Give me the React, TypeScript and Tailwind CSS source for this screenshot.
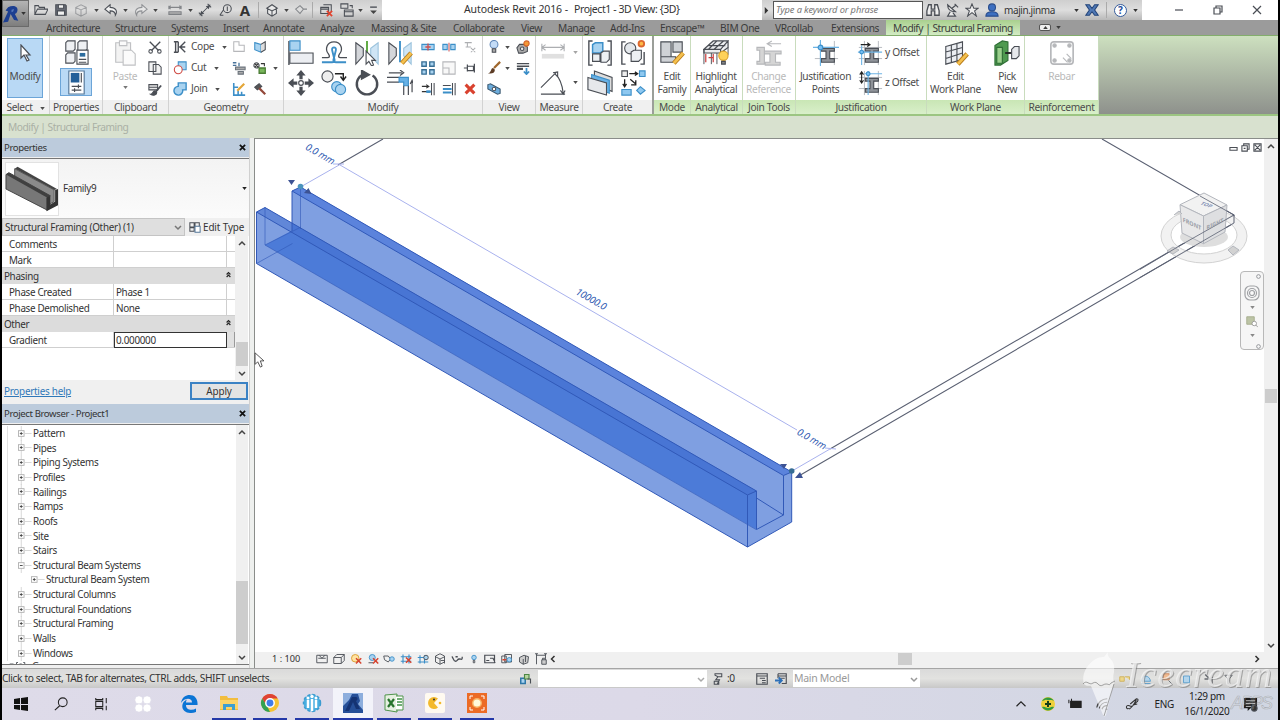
import type { ReactNode } from 'react';

interface IconProps {
  size?: string;
  box?: number;
  className?: string;
  children: ReactNode;
}

const DARK = '#4a4e55';
const BLUE = '#3c8fc8';
const SKY = '#a9d3f0';

function Icon({ size = 'w-[14px] h-[14px]', box = 16, className = '', children }: IconProps) {
  return (
    <svg
      viewBox={`0 0 ${box} ${box}`}
      className={`${size} ${className} block shrink-0`}
      fill="none"
      stroke={DARK}
      strokeWidth="1.2"
    >
      {children}
    </svg>
  );
}

function Big({ children }: { children: ReactNode }) {
  return <Icon size="w-[26px] h-[26px]" box={28}>{children}</Icon>;
}

function Caret({ className = '' }: { className?: string }) {
  return (
    <svg viewBox="0 0 6 4" className={`w-[5px] h-[3px] shrink-0 ${className}`}>
      <path d="M0 0h6L3 4z" fill="currentColor" />
    </svg>
  );
}

function Chevron({ d, className = '' }: { d: 'up' | 'down' | 'left' | 'right'; className?: string }) {
  const paths = { up: 'M1 6l3-3 3 3', down: 'M1 3l3 3 3-3', left: 'M5.5 1l-3 3 3 3', right: 'M2.5 1l3 3-3 3' };
  return (
    <svg viewBox="0 0 8 8" className={`w-[8px] h-[8px] shrink-0 ${className}`} fill="none" stroke="currentColor" strokeWidth="1.5">
      <path d={paths[d]} />
    </svg>
  );
}

/* ---------- title bar ---------- */

function QuickAccess() {
  return (
    <div className="w-[380px] h-[20px] shrink-0 flex items-center bg-gradient-to-b from-[#cfcfcf] via-[#dedede] to-[#b9b9b9] pl-[32px] text-[#444]">
      <Icon className="mr-[6px]"><path d="M1 13V3h4l1 2h6v2M1 13l3-6h12l-3 6z" /></Icon>
      <Icon className="mr-[6px]"><path d="M2 2h11l1 1v11H2z" fill="#676b75" /><path d="M5 2h6v4H5zM4 9h8v5H4z" fill="#f2f2f2" /></Icon>
      <Icon className="opacity-40"><path d="M2 5l6-3 6 3v7l-6 3-6-3zM2 5l6 3 6-3M8 8v7" /></Icon>
      <Caret className="ml-[6px] mr-[5px]" />
      <Icon><path d="M7 2L1 7l6 5V9c4 0 6 1 6 5 3-5 0-9-6-9z" fill="#f2f2f2" /></Icon>
      <Caret className="ml-[5px] mr-[6px]" />
      <Icon className="opacity-50"><path d="M9 2l6 5-6 5V9c-4 0-6 1-6 5-3-5 0-9 6-9z" fill="#f2f2f2" /></Icon>
      <Caret className="ml-[5px] mr-[10px]" />
      <Icon className="opacity-60"><path d="M1 5h14M1 3v4M15 3v4M3 3L1 5l2 2M13 3l2 2-2 2" /><path d="M1 10h14v3H1z" fill="#999" /></Icon>
      <Caret className="ml-[6px] mr-[5px]" />
      <Icon className="mr-[7px]"><path d="M2 14L14 2M1 11l4 4M11 1l4 4" /><path d="M3 13l3-1-2-2zM13 3l-3 1 2 2z" fill={DARK} /></Icon>
      <Icon className="mr-[5px]"><circle cx="9.500" cy="6.500" r="4.500" /><path d="M9.500 4v5M5 8l-4 6M1 14h4" /></Icon>
      <span className="text-[15px] leading-[20px] font-bold w-[14px] text-center text-[#333]">A</span>
      <div className="w-px h-[16px] bg-[#aaa] mx-[6px]" />
      <Icon><path d="M2 6l6-4 6 4-6 3zM3 7v5l5 3 5-3V7M8 9v6" fill="#e9e9e9" /></Icon>
      <Caret className="ml-[5px] mr-[4px]" />
      <Icon><path d="M3 7l5-4 4 4-4 5zM12 7h4" opacity=".6" /></Icon>
      <div className="w-px h-[16px] bg-[#aaa] ml-[5px] mr-[6px]" />
      <Icon className="mr-[7px]"><path d="M5 2h9v7M2 5h9v7H2zM2 7h9" /><path d="M9 9l6 6M15 9l-6 6" stroke="#e0432f" strokeWidth="2" /></Icon>
      <Icon><path d="M1 1h8v5H1zM5 8h10v7H5zM5 10h10M11 3h3v3" /></Icon>
      <Caret className="ml-[4px] mr-[6px]" />
      <Icon size="w-[9px] h-[9px]" box={8}><path d="M1 1h6" /><path d="M1 4h6L4 7z" fill="#444" stroke="none" /></Icon>
    </div>
  );
}

function TitleBar() {
  return (
    <div className="h-[20px] flex bg-white">
      <QuickAccess />
      <div className="w-[380px] h-[20px] shrink-0 flex items-center pl-[82px] text-[10.5px] tracking-[-0.1px] text-[#333] whitespace-pre">
        <span className="w-[110px]">Autodesk Revit 2016 -</span>
        <span className="tracking-[-0.42px]">Project1 - 3D View: {'{3D}'}</span>
      </div>
      <div className="w-[380px] h-[20px] shrink-0 flex items-center bg-gradient-to-b from-[#cfcfcf] via-[#dedede] to-[#b9b9b9] text-[#333]">
        <Icon size="w-[7px] h-[7px]" box={8} className="ml-[1px] mr-[3px]"><path d="M2 0l4 4-4 4z" fill="#333" stroke="none" /></Icon>
        <div className="w-[150px] h-[18px] bg-white border border-[#555] flex items-center pl-[2px] text-[9.3px] tracking-[-0.12px] italic text-[#777]">Type a keyword or phrase</div>
        <Icon className="ml-[3px] mr-[5px]"><path d="M3 2h3v5h4V2h3l2 7v5h-5V9H6v5H1V9z" fill="#eee" strokeWidth="1.500" /></Icon>
        <Icon className="mr-[6px]"><path d="M3 2c0 6 4 8 9 8zM8 6l5-4M6 10l-3 5h9l-3-4M11 1l4 4" fill="#e9e9e9" strokeWidth="1.300" /></Icon>
        <Icon className="mr-[6px]"><path d="M8 1l2 5h5l-4 3 2 6-5-4-5 4 2-6-4-3h5z" fill="#eee" /></Icon>
        <Icon><circle cx="8" cy="5" r="4" fill="#3d6fc0" stroke="#2a4d8c" /><path d="M1 15c0-4 3-5 7-5s7 1 7 5z" fill="#3d6fc0" stroke="#2a4d8c" /></Icon>
        <span className="text-[10px] tracking-[-0.4px] ml-[5px] w-[70px]">majin.jinma</span>
        <Caret className="mr-[6px]" />
        <Icon><path d="M1 2h4l3 4 3-4h4l-4 6 4 6h-4l-3-4-3 4H1l4-6z" fill="#4f78b5" stroke="#24457a" /></Icon>
        <div className="w-px h-[16px] bg-[#aaa] mx-[7px]" />
        <div className="w-[13px] h-[13px] rounded-full border border-[#345b9b] bg-white text-[#1c4b9b] text-[10px] leading-[11px] font-bold text-center">?</div>
        <Caret className="ml-[6px]" />
      </div>
      <div className="flex-1 flex items-center text-[#333]">
        <Icon size="w-[10px] h-[10px]" box={10} className="ml-[32px] mr-[29px]"><path d="M1 5h8" /></Icon>
        <Icon size="w-[10px] h-[10px]" box={10} className="mr-[29px]"><path d="M1 3h6v6H1zM3 3V1h6v6H7" /></Icon>
        <Icon size="w-[10px] h-[10px]" box={10}><path d="M1 1l8 8M9 1L1 9" /></Icon>
      </div>
    </div>
  );
}

const TABS = [
  ['Architecture', 'w-[69px]'], ['Structure', 'w-[56px]'], ['Systems', 'w-[52px]'], ['Insert', 'w-[40px]'],
  ['Annotate', 'w-[57px]'], ['Analyze', 'w-[51px]'], ['Massing & Site', 'w-[82px]'], ['Collaborate', 'w-[68px]'],
  ['View', 'w-[37px]'], ['Manage', 'w-[52px]'], ['Add-Ins', 'w-[50px]'], ['Enscape™', 'w-[60px]'],
  ['BIM One', 'w-[55px]'], ['VRcollab', 'w-[56px]'], ['Extensions', 'w-[55px]'],
];

function RibbonTabs() {
  return (
    <div className="h-[16px] flex bg-[#9b9b9b] border-b border-[#83ad6c] pl-[44px] text-[10.2px] leading-[16px] tracking-[-0.35px] text-[#3c3c3c] whitespace-nowrap">
      {TABS.map(([name, width]) => (
        <div key={name} className={`${width} shrink-0`}>{name}</div>
      ))}
      <div className="w-[134px] h-[15px] shrink-0 bg-gradient-to-b from-[#a9d08e] to-[#d3ebc4] pl-[7px] tracking-[-0.5px]">Modify | Structural Framing</div>
      <div className="flex items-center ml-[19px] gap-[5px]">
        <div className="w-[12px] h-[7px] rounded-[2px] border border-[#555] bg-[#eee] flex items-center justify-center">
          <Caret className="rotate-180" />
        </div>
        <Caret />
      </div>
    </div>
  );
}

/* ---------- ribbon ---------- */

function Panel({ title, width, green, children }: { title: ReactNode; width: string; green?: boolean; children: ReactNode }) {
  return (
    <div className={`${width} shrink-0 h-full flex flex-col border-r ${green ? 'border-[#c9dcbd]' : 'border-[#d2d2d2]'}`}>
      <div className="h-[64px] flex">{children}</div>
      <div className={`h-[14px] pt-[2px] flex items-center justify-center whitespace-nowrap ${green ? 'bg-gradient-to-b from-[#c9e6b5] to-[#d9efca]' : 'bg-[#f0f0f0]'}`}>{title}</div>
    </div>
  );
}

function LargeButton({ icon, lines, width, muted }: { icon: ReactNode; lines: string[]; width: string; muted?: boolean }) {
  return (
    <div className={`${width} shrink-0 flex flex-col items-center pt-[4px] leading-[13.4px] whitespace-nowrap ${muted ? 'text-[#b9b9b9]' : ''}`}>
      <div className={`mb-[4px] ${muted ? 'opacity-40' : ''}`}>{icon}</div>
      {lines.map((line) => <span key={line}>{line}</span>)}
    </div>
  );
}

const copeIcon = <Icon><path d="M1 2h5M1 14h5M3 2v12M6 2v12M8 8l6-6M8 8l6 6M7 8h7" strokeWidth="1.600" /></Icon>;
const cutIcon = <Icon><path d="M6 1h9v9H6z" fill={SKY} stroke={BLUE} /><circle cx="6" cy="10" r="4.500" fill="#fff" stroke="#cf4a43" /></Icon>;
const joinIcon = <Icon><path d="M6 1h9v8h-4a5 5 0 1 1-5-4z" fill={SKY} stroke={BLUE} strokeWidth="1.600" /></Icon>;

const GEOMETRY_MID = [
  <Icon key="a" className="opacity-40"><path d="M2 2h6v4h6v7H2z" /></Icon>,
  <Icon key="b"><path d="M1 2h4M1 5h4M8 2v4" stroke="#47729a" strokeWidth="1.500" /><path d="M4 7h11v3H4zM7 12h6v3H7z" fill="#aaa" stroke="#6b737c" /></Icon>,
  <Icon key="c"><path d="M2 1v14h13M2 6h5M7 15v-5M11 15v-4" stroke={BLUE} strokeWidth="1.800" /><path d="M6 10l8-8" stroke="#e4a637" strokeWidth="2.500" /></Icon>,
];
const GEOMETRY_END = [
  <Icon key="a"><path d="M2 3l7 2v9l-7-3z" fill={SKY} stroke={BLUE} /><path d="M9 5l5-3v9l-5 3" fill="#ddd" /></Icon>,
  <Icon key="b"><circle cx="4" cy="5" r="3" fill="#ddd" /><path d="M2 3l4 4M6 3L2 7M9 3h4v3" stroke="#333" /><path d="M7 8h7v6H7z" fill="#79b65b" stroke="#4b7d35" strokeWidth="1.500" /></Icon>,
  <Icon key="c"><path d="M2 6l5-4 3 3-5 4z" fill="#555" /><path d="M7 7l7 7" stroke="#93483a" strokeWidth="2.500" /></Icon>,
];

const MODIFY_LARGE = [
  <Big key="align"><path d="M1 1v26" strokeWidth="1.500" /><path d="M2 1h11v10H2z" fill={SKY} stroke={BLUE} /><path d="M2 14h25v11H2z" fill="#eceef2" /></Big>,
  <Big key="offset"><path d="M1 19h6c2 0 3-1 1-4-4-5-2-13 6-13s10 8 6 13c-2 3-1 4 1 4h7" strokeWidth="1.400" /><path d="M1 24h11c3 0 3-2 2-5l-2-8c-1-4 5-4 4 0l-2 8c-1 3-1 5 2 5h11" stroke={BLUE} strokeWidth="2" /></Big>,
  <Big key="mirror"><path d="M2 3l8 6v8l-8 9z" fill="#d4d6da" /><path d="M26 3l-8 6v8l8 9z" fill="#cfe5f5" stroke="#9cc3dd" /><path d="M14 1v18" stroke="#57a639" strokeWidth="2" /><path d="M13 12v14l3-3 3 5 2-1-2-5h4z" fill="#fff" /></Big>,
  <Big key="mirror2"><path d="M2 3l8 6v8l-8 9z" fill="#d4d6da" /><path d="M26 3l-8 6v8l8 9z" fill="#cfe5f5" stroke="#9cc3dd" /><path d="M14 1v23" stroke={BLUE} strokeWidth="2" /><path d="M16 25l10-11" stroke="#b87b19" strokeWidth="5" /><path d="M16 25l10-11" stroke="#f4c04e" strokeWidth="3" /></Big>,
  <Big key="move"><path d="M14 5v5M14 18v5M5 14h5M18 14h5" strokeWidth="3.500" /><path d="M14 0l5 6H9zM14 28l5-6H9zM0 14l6-5v10zM28 14l-6-5v10z" fill={DARK} stroke="none" /><circle cx="14" cy="14" r="2.500" /></Big>,
  <Big key="copy"><circle cx="7" cy="7" r="6" fill="#eee" /><circle cx="17" cy="18" r="5.500" fill={SKY} stroke={BLUE} /><circle cx="21" cy="21" r="5.500" fill={SKY} stroke={BLUE} /><path d="M15 4h9v6M21 7l3 4 3-4" stroke="#222" strokeWidth="1.500" /></Big>,
  <Big key="rotate"><path d="M8 6a11 11 0 1 0 12 0" strokeWidth="2.600" /><path d="M8 0l9 5-9 5z" fill={DARK} /></Big>,
  <Big key="trim"><path d="M0 8h15M0 13h13" /><path d="M13 8h10v9h-5v-4h-5z" fill="#67b1e6" stroke={BLUE} /><path d="M18 17v10M23 17v10M2 3h14M14 0l4 3-4 3M27 24V12M25 15l2-4 1 3" strokeWidth="1.300" /></Big>,
];

const MODIFY_SMALL = [
  <Icon key="1"><path d="M1 5h14v6H1z" fill={SKY} stroke={BLUE} /><path d="M5 8h6M8 4v8" stroke="#d05050" strokeWidth="1.500" /></Icon>,
  <Icon key="2"><path d="M1 5h5v6H1zM10 5h5v6h-5z" fill={SKY} stroke={BLUE} /><path d="M8 3v10" stroke="#d05050" /></Icon>,
  <Icon key="3" className="opacity-45"><path d="M2 3h8M5 3v5M3 8h6M9 9l5 5M14 9l-5 5" /></Icon>,
  <Icon key="4"><path d="M1 1h5v5H1zM10 1h5v5h-5zM1 10h5v5H1zM10 10h5v5h-5z" fill={SKY} stroke="#386e94" strokeWidth="1.500" /></Icon>,
  <Icon key="5" className="opacity-40"><path d="M1 1h14v14H1zM1 8h7v7" fill="#eee" /></Icon>,
  <Icon key="6"><path d="M1 8h4M5 4v8M5 6h7v5H5M13 3v10" strokeWidth="1.400" /></Icon>,
  <Icon key="7"><path d="M12 1v14M15 1v14" /><path d="M1 5h7M6 3l3 2-3 2M1 11h10" stroke="#333" /><path d="M6 11h5" stroke={BLUE} strokeWidth="3" /></Icon>,
  <Icon key="8"><path d="M12 1v14M15 1v14M1 4h9" /><path d="M1 8h10M1 12h10" stroke={BLUE} strokeWidth="2.500" /></Icon>,
  <Icon key="9"><path d="M3 3l10 10M13 3L3 13" stroke="#d9422f" strokeWidth="3.500" /></Icon>,
];

const beam = <g stroke="#b4b8bd"><path d="M2 20h25M2 8h25M8 1v26M23 1v26" strokeWidth="1" /><path d="M9 9h14v3h-5v8h5v4H9v-4h5v-8H9z" fill="#8f9399" stroke={DARK} /></g>;

function Ribbon() {
  return (
    <div className="h-[80px] flex bg-white border-b-2 border-[#9cc582] text-[10.2px] tracking-[-0.35px] text-[#4c4c4c]">
      <Panel width="w-[48px]" title={<span className="flex items-center gap-[7px]">Select <Caret /></span>}>
        <div className="w-[36px] h-[60px] ml-[5px] mt-[2px] bg-[#b9d9f5] border border-[#6ca5d8] flex flex-col items-center pt-[5px]">
          <Icon size="w-[18px] h-[18px]" box={18}><path d="M5 1v13l3-3 3 6 2-1-3-5h4z" fill="#fff" /></Icon>
          <span className="mt-[7px] leading-[14px]">Modify</span>
        </div>
      </Panel>
      <Panel width="w-[53px]" title="Properties">
        <div className="w-full flex flex-col items-center pt-[3px]">
          <Icon size="w-[26px] h-[26px]" box={28}><path d="M3 4l2-2h8v9l-2 2H3zM16 4l2-2h8v9l-2 2h-8zM3 17l2-2h8v9l-2 2H3z" fill="#eef0f3" /><path d="M15 12h12v15H15z" fill="#fff" /><path d="M18 15h6v4h-6z" fill="#2d6d9f" stroke="none" /><path d="M17 22h8M17 25h8" /></Icon>
          <div className="mt-[3px] w-[32px] h-[28px] bg-[#b9d9f5] border border-[#6ca5d8] flex items-center justify-center">
            <Icon size="w-[25px] h-[25px]" box={26}><path d="M5 1h16v24H5z" fill="#fff" stroke="#55789a" /><path d="M7 3h9v10H7z" fill="#225f99" stroke="none" /><path d="M8 17h10M8 21h10M15 15v4M11 19v4M18 3v10" /></Icon>
          </div>
        </div>
      </Panel>
      <Panel width="w-[66px]" title="Clipboard">
        <div className="w-[44px] flex flex-col items-center pt-[4px] text-[#b9b9b9]">
          <div className="opacity-35"><Big><path d="M4 3h16v21H4z" fill="#ddd" /><path d="M8 1h8v5H8zM12 11h9l4 4v12H12z" fill="#f4f4f4" /></Big></div>
          <span className="leading-[13px] mt-[4px]">Paste</span>
          <Caret className="mt-[3px] text-[#777]" />
        </div>
        <div className="flex flex-col gap-[7px] pt-[4px] ml-[1px]">
          <Icon><path d="M2 2l10 10M14 2L4 12" strokeWidth="1.600" /><circle cx="3" cy="13" r="2" /><circle cx="13" cy="13" r="2" /></Icon>
          <Icon><path d="M1 1h8v11H1zM6 4h6l3 3v8H6z" fill="#f3f3f3" /></Icon>
          <Icon><path d="M1 3h10v6H1zM1 6h10" fill="#e9e9e9" /><path d="M15 4l-6 7" strokeWidth="2" /><path d="M3 14c3 0 2-4 5-4l2 2c0 3-4 4-7 2z" fill={DARK} /></Icon>
        </div>
      </Panel>
      <Panel width="w-[115px]" title="Geometry">
        <div className="w-[59px] flex flex-col gap-[7px] pt-[4px] pl-[4px]">
          {[['Cope', copeIcon], ['Cut', cutIcon], ['Join', joinIcon]].map(([label, icon]) => (
            <div key={label as string} className="flex items-center h-[14px]">
              {icon}<span className="ml-[4px] mr-[8px]">{label}</span><Caret />
            </div>
          ))}
        </div>
        <div className="flex flex-col gap-[7px] pt-[4px] ml-[4px]">{GEOMETRY_MID}</div>
        <div className="flex flex-col gap-[7px] pt-[4px] ml-[7px]">{GEOMETRY_END}</div>
        <Caret className="mt-[31px] ml-[6px]" />
      </Panel>
      <Panel width="w-[199px]" title="Modify">
        <div className="grid grid-cols-4 w-[132px] pt-[2px] auto-rows-[30px] justify-items-center items-center">{MODIFY_LARGE}</div>
        <div className="grid grid-cols-3 w-[63px] pt-[4px] ml-[1px] auto-rows-[21px] justify-items-center">{MODIFY_SMALL}</div>
      </Panel>
      <Panel width="w-[53px]" title="View">
        <div className="w-[18px] pt-[4px] flex flex-col gap-[7px] items-end">
          <Icon><circle cx="8" cy="5" r="4.500" fill="#c4dcf7" stroke="#6288b8" /><path d="M6 10h4v4H6z" fill="#aaa" /></Icon>
          <Icon><path d="M15 1L8 8" stroke="#a0672c" strokeWidth="2.500" /><path d="M1 14c4 0 3-6 6-6l2 2c0 4-4 5-8 4z" fill="#5d3c25" stroke="none" /></Icon>
          <Icon><path d="M1 3l3-1 11 6v5l-3 1L1 8z" fill="#6daddd" stroke="#39566e" /><circle cx="8" cy="8" r="2" fill="#fff" /></Icon>
        </div>
        <div className="flex flex-col gap-[18px] pt-[10px] ml-[4px]"><Caret /><Caret /></div>
        <div className="flex flex-col gap-[7px] pt-[4px] ml-[6px]">
          <Icon><path d="M1 9l3-4h5l4 3v5l-5 2H3z" fill="#aaa" /><circle cx="7" cy="10" r="2" fill="#eee" /><circle cx="12" cy="4" r="3" fill="#f49a36" stroke="#d4622b" /></Icon>
          <Icon><path d="M1 3h14M1 6h14" strokeWidth="1.500" /><path d="M1 9h7" strokeWidth="2.500" /><path d="M12 8v7M9 12l3 3 3-3" stroke={BLUE} strokeWidth="2" /></Icon>
        </div>
      </Panel>
      <Panel width="w-[47px]" title="Measure">
        <div className="flex flex-col gap-[4px] pt-[4px] ml-[4px]">
          <div className="opacity-45"><Big><path d="M2 8h24M2 4v8M26 4v8M6 5L2 8l4 3M22 5l4 3-4 3" /><path d="M2 15h24v5H2z" fill="#bbb" stroke="none" /></Big></div>
          <Big><path d="M1 26h26M1 19L18 2M16 4c6 5 8 12 9 21M14 3l5-1v5M22 22l3 4 2-4" /></Big>
        </div>
        <div className="flex flex-col gap-[27px] pt-[15px] ml-[7px]"><Caret className="opacity-50" /><Caret /></div>
      </Panel>
      <Panel width="w-[70px]" title="Create">
        <div className="grid grid-cols-2 w-[66px] pt-[2px] auto-rows-[30px] justify-items-center items-center">
          <Big><path d="M6 1H2v26h4M22 1h4v26h-4" strokeWidth="1.500" /><path d="M6 5l3-2h8v9l-3 2H6z" fill={SKY} stroke={BLUE} strokeWidth="1.600" /><path d="M6 15h8v8H6zM15 14l3-2h6v9l-3 3h-6z" fill="#edf0f3" /></Big>
          <Big><path d="M6 2H2v24h4M22 26h4V13" strokeWidth="1.500" /><circle cx="11" cy="9" r="6" fill="#e4e8ec" /><path d="M12 13l3-2h8v9l-3 3h-8z" fill="#edf0f3" /><circle cx="23" cy="4" r="3" fill="#fcba48" stroke="#dd682f" strokeWidth="2" /></Big>
          <Big><path d="M8 1l19 7v15L8 16z" fill="#ddd" /><path d="M5 5l19 6v14L5 18z" fill="#67b1e6" stroke={BLUE} /><path d="M1 8l20 6v13L1 21z" fill="#e6e8eb" /></Big>
          <Big><path d="M2 1h6v6H2z" fill="#eee" /><path d="M21 1h6v6h-6zM2 21h10v6H2zM18 22l4-4 5 4-5 4z" fill="#8ec8f0" stroke={BLUE} /><path d="M10 4h8M16 2l3 2-3 2M5 10v7M3 15l2 3 2-3M11 10l6 5M17 11v5h-5" stroke="#222" strokeWidth="1.400" /></Big>
        </div>
      </Panel>
      <div className="w-[2px] h-full bg-[#9b9f99] shrink-0 -ml-[1px]" />
      <Panel width="w-[37px]" title="Mode" green>
        <LargeButton width="w-[36px]" lines={['Edit', 'Family']} icon={<Big><path d="M2 2h11v16H2zM15 2h10v11H15zM2 18h16v6H2z" fill="#cfd2d6" /><path d="M16 25l10-11" stroke="#b87b19" strokeWidth="5" /><path d="M16 25l10-11" stroke="#f4c04e" strokeWidth="3" /></Big>} />
      </Panel>
      <Panel width="w-[52px]" title="Analytical" green>
        <LargeButton width="w-[50px]" lines={['Highlight', 'Analytical']} icon={<Big><path d="M1 10L11 1h16l-8 9zM1 10v4h18v-4M27 1v7l-8 6M6 10l9-9M12 10l10-9M6 6h18" fill="#eceef0" strokeWidth="1.300" /><path d="M1 10v16M9 14v12M15 14v12M27 8v8" strokeWidth="1" /><path d="M3 15v9M11 15v9M6 19h5" stroke="#cc3b3b" strokeWidth="1.300" /><circle cx="22" cy="17" r="5" fill="#ffd25a" stroke="#dca32b" /><path d="M20 23h4v3h-4z" fill="#888" /></Big>} />
      </Panel>
      <Panel width="w-[53px]" title="Join Tools" green>
        <LargeButton muted width="w-[51px]" lines={['Change', 'Reference']} icon={<Big><path d="M13 4h14M17 1l-5 3 5 3" /><path d="M1 8h8v18H1v-3h3V11H1zM9 12h18v3h-6v9h5v3H10v-3h5v-9H9z" fill="#999" /></Big>} />
      </Panel>
      <Panel width="w-[131px]" title="Justification" green>
        <LargeButton width="w-[59px]" lines={['Justification', 'Points']} icon={<Big>{beam}<path d="M8 0v28M0 8h28" stroke="#6db4e5" /><circle cx="8" cy="8" r="2.500" fill="#77bff5" stroke={BLUE} /></Big>} />
        <div className="flex flex-col gap-[4px] pt-[4px] ml-[2px]">
          <div className="flex items-center"><Big>{beam}<path d="M5 6v21M1 13h26" stroke="#6db4e5" /><circle cx="5" cy="13" r="2" fill="#77bff5" stroke={BLUE} /><path d="M4 5h9M11 3l3 2-3 2" stroke="#222" /></Big><span className="whitespace-nowrap ml-[2px]">y Offset</span></div>
          <div className="flex items-center"><Big>{beam}<path d="M12 1v26M8 4h19" stroke="#6db4e5" /><circle cx="12" cy="4" r="2" fill="#77bff5" stroke={BLUE} /><path d="M5 3v10M3 5l2-3 2 3M3 11l2 3 2-3" stroke="#222" /></Big><span className="whitespace-nowrap ml-[2px]">z Offset</span></div>
        </div>
      </Panel>
      <Panel width="w-[98px]" title="Work Plane" green>
        <LargeButton width="w-[57px]" lines={['Edit', 'Work Plane']} icon={<Big><path d="M3 7l18-5v19L3 26zM3 13l18-5M3 20l18-6M9 5v19M15 4v18" fill="#eceef2" /><path d="M16 26l10-11" stroke="#b87b19" strokeWidth="5" /><path d="M16 26l10-11" stroke="#f4c04e" strokeWidth="3" /></Big>} />
        <div className="w-px bg-[#d9d9d9] ml-[2px]" />
        <LargeButton width="w-[42px]" lines={['Pick', 'New']} icon={<Big><path d="M1 6l8-5 6 1v20l-8 5H1z" fill="#4f9a50" stroke="#2e6e35" /><path d="M3 8h6v17H3z" fill="#9bd08d" stroke="#2e6e35" /><path d="M12 14h8" stroke="#222" strokeWidth="2" /><path d="M19 10l3-3h5v10l-3 3h-5z" fill="#e6e8eb" /></Big>} />
      </Panel>
      <Panel width="w-[74px]" title="Reinforcement" green>
        <LargeButton muted width="w-[73px]" lines={['Rebar']} icon={<Big><rect x="2" y="2" width="24" height="24" rx="3" strokeWidth="1.800" /><circle cx="6" cy="6" r="1.800" fill={DARK} /><circle cx="22" cy="6" r="1.800" fill={DARK} /><circle cx="6" cy="22" r="1.800" fill={DARK} /><circle cx="22" cy="22" r="1.800" fill={DARK} /><path d="M15 19l5 5M19 15l5 5" /></Big>} />
      </Panel>
      <div className="flex-1 bg-gradient-to-b from-[#cde0bf] to-[#8e918c]" />
    </div>
  );
}

/* ---------- left docked palettes ---------- */

function PaletteHeader({ title }: { title: string }) {
  return (
    <div className="h-[19px] shrink-0 bg-[#bccbdc] flex items-center justify-between pl-[2px] pr-[3px] text-[#333]">
      <span className="text-[9.6px] tracking-[-0.4px] pt-[1px]">{title}</span>
      <Icon size="w-[7px] h-[7px]" box={8}><path d="M1 1l6 6M7 1L1 7" stroke="#111" strokeWidth="2" /></Icon>
    </div>
  );
}

type Row = { name: string; value?: string; group?: boolean; active?: boolean };

const ROWS: Row[] = [
  { name: 'Comments', value: '' },
  { name: 'Mark', value: '' },
  { name: 'Phasing', group: true },
  { name: 'Phase Created', value: 'Phase 1' },
  { name: 'Phase Demolished', value: 'None' },
  { name: 'Other', group: true },
  { name: 'Gradient', value: '0.000000', active: true },
];

function PropertyRow({ row }: { row: Row }) {
  if (row.group) {
    return (
      <div className="h-[16px] bg-[#dcdcdc] flex items-center justify-between pl-[2px] pr-[4px]">
        <span className="pt-[1px]">{row.name}</span>
        <Icon size="w-[5px] h-[7px]" box={8} className="mb-[4px]"><path d="M1 4l3-3 3 3M1 8l3-3 3 3" stroke="#222" strokeWidth="1.900" /></Icon>
      </div>
    );
  }
  return (
    <div className="h-[16px] flex border-b border-[#cfcfcf] leading-[16px]">
      <div className="w-[112px] pl-[7px] border-r border-[#cfcfcf]">{row.name}</div>
      <div className={`w-[113px] ${row.active ? 'border border-[#333] -mb-px leading-[15px] pl-px tracking-[-0.3px]' : 'border-r border-[#cfcfcf] pl-[2px]'}`}>{row.value}</div>
      {row.active && <div className="flex-1 bg-[#e1e1e1] border-r border-[#999]" />}
    </div>
  );
}

function PropertiesPalette() {
  return (
    <div className="h-[266px] flex flex-col bg-[#f0f0f0]">
      <PaletteHeader title="Properties" />
      <div className="h-[60px] shrink-0 mt-[1px] border-t border-[#777] bg-gradient-to-b from-[#f3f3f3] to-[#fbfbfb] flex items-center pl-[3px] pr-[2px]">
        <div className="w-[54px] h-[54px] bg-white border border-[#e2e2e2]">
          <svg viewBox="0 0 54 54" className="w-[52px] h-[52px] overflow-visible">
            <path d="M9 6l3-2 41 23-3 1z" fill="#444" />
            <path d="M9 6l41 22v12l-7 4V34L9 15z" fill="#8a8a8a" stroke="#555" />
            <path d="M0 12l3-2 43 24-3 1v14L0 27z" fill="#777" stroke="#444" />
            <path d="M0 12l3-2 43 24-3 2z" fill="#3f3f3f" />
            <path d="M42 36l4-2v9l5-3V28l3-1v17l-12 6z" fill="#333" />
          </svg>
        </div>
        <span className="flex-1 ml-[4px]">Family9</span>
        <Caret className="text-[#222]" />
      </div>
      <div className="h-[18px] shrink-0 flex items-center">
        <div className="w-[183px] h-[18px] bg-[#dfdfdf] border border-[#c4c4c4] flex items-center justify-between pl-[2px] pr-[2px] whitespace-nowrap tracking-[-0.25px]">
          Structural Framing (Other) (1) <Chevron d="down" className="text-[#777]" />
        </div>
        <Icon size="w-[12px] h-[12px]" box={14} className="ml-[4px] mr-[2px]"><path d="M1 2h5v5H1zM7 2h5v5H7zM1 8h5v4H1z" /><path d="M7 6h6v7H7z" fill="#fff" stroke="#55789a" /></Icon>
        <span className="whitespace-nowrap tracking-[-0.1px]">Edit Type</span>
      </div>
      <div className="h-[144px] shrink-0 flex bg-white">
        <div className="w-[233px]">
          {ROWS.map((row) => <PropertyRow key={row.name} row={row} />)}
        </div>
        <div className="w-[13px] flex flex-col items-center bg-[#f0f0f0] py-[3px] text-[#444]">
          <Chevron d="up" />
          <div className="flex-1" />
          <div className="w-[12px] h-[24px] bg-[#cdcdcd] mb-[3px]" />
          <Chevron d="down" />
        </div>
      </div>
      <div className="h-[22px] shrink-0 flex items-center justify-between pl-[2px] pr-[1px]">
        <span className="text-[#2f78b9] underline tracking-[-0.25px]">Properties help</span>
        <div className="w-[58px] h-[18px] border-2 border-[#3b82c4] bg-[#e3e3e3] text-center leading-[15px] tracking-[-0.1px]">Apply</div>
      </div>
    </div>
  );
}

const TREE = [
  'Pattern', 'Pipes', 'Piping Systems', 'Profiles', 'Railings', 'Ramps', 'Roofs', 'Site', 'Stairs',
  'Structural Beam Systems', '>Structural Beam System', 'Structural Columns', 'Structural Foundations',
  'Structural Framing', 'Walls', 'Windows',
];

function ProjectBrowser() {
  return (
    <div className="h-[261px] flex flex-col">
      <PaletteHeader title="Project Browser - Project1" />
      <div className="flex-1 min-h-0 mt-[1px] flex border-t border-b border-[#777] bg-white overflow-hidden">
        <div className="flex-1 pl-[5px] pt-[1px]">
          <div className="border-l border-[#e2e2e2] pl-[9px]">
            {TREE.map((item) => {
              const nested = item.startsWith('>');
              const open = item === 'Structural Beam Systems';
              return (
                <div key={item} className={`h-[14.67px] flex items-center whitespace-nowrap ${nested ? 'pl-[13px]' : ''}`}>
                  <Icon size="w-[16px] h-[15px]" box={16}>
                    {!nested && <path d="M4 0v16" stroke="#d5d5d5" strokeWidth="1" />}
                    <path d="M8 8h7" stroke="#d5d5d5" strokeWidth="1" />
                    <rect x="1" y="5" width="6" height="6" fill="#fff" stroke="#aaa" strokeWidth=".9" />
                    <path d={open ? 'M2.500 8h3' : 'M2.500 8h3M4 6.500v3'} stroke="#444" strokeWidth="1" />
                  </Icon>
                  <span>{nested ? item.slice(1) : item}</span>
                </div>
              );
            })}
          </div>
          <div className="h-[10px] flex items-start whitespace-nowrap leading-[10px]">
            <Icon size="w-[22px] h-[12px]" box={16} className="mr-[3px]"><path d="M-3 4h5M8 2H6v9h2M15 2h2v9h-2M10 4h3v4h-3z" /></Icon>
            Groups
          </div>
        </div>
        <div className="w-[12px] flex flex-col items-center bg-[#f0f0f0] py-[3px] text-[#444] mr-[1px]">
          <Chevron d="up" />
          <div className="flex-1" />
          <div className="w-[12px] h-[63px] bg-[#cdcdcd] mb-[9px]" />
          <Chevron d="down" />
        </div>
      </div>
    </div>
  );
}

/* ---------- drawing area ---------- */

function Drawing() {
  return (
    <svg viewBox="255 139 1009 513" className="w-[1009px] h-[513px] block" fill="none">
      <path d="M338 165l45-26M1102 139l132 76v8M830 449l350-203.500 54-30.500M797 477l437-254" stroke="#5a6072" strokeWidth="1.100" />
      <path d="M300.500 187L340 164.500M333 164h11M340 165L797 430M825 448l11 1M792 471l38-22" stroke="#a9b2ee" strokeWidth="1" />

      <path d="M256.500 212l8.500-4.500L292 223v-32l8.500-4L791.700 472v50l-44.200 25L256.500 263.500z" fill="#7f9fe1" />
      <path d="M292 191l8.500-4L791.700 472l-8.200 3.500z" fill="#5b83dc" />
      <path d="M265 245l27-14.500V223l464.500 268v38.500z" fill="#4c7bd8" />
      <path d="M256.500 212l8.500-4.500L292 223l464.500 268-9 4z" fill="#4470d0" opacity=".5" />
      <g stroke="#3159b8" strokeWidth="1">
        <path d="M256.500 212l8.500-4.500L756.500 491v38.500l27-14.500v-39.500L292 191v40M256.500 212v51.500l491 283.500 44.200-25v-50L300.500 187l-8.500 4M256.500 212l491 283v52M747.500 495l9-4M783.500 475.500l8.200-3.500M756.500 498l27 17" />
        <path d="M265 207.500V245l36-18M256.500 263.500l36-20M300.500 187v42M265 245l491 284.500" opacity=".6" />
      </g>
      <path d="M288 180h7l-3.500 5zM304 193l4.500-5 3 6zM780 464h7l-3 5zM795 478l5-6 3 6z" fill="#3d5394" />
      <circle cx="300.500" cy="186.500" r="2.800" fill="#4b93bd" />
      <circle cx="791.700" cy="471" r="2.800" fill="#366d94" />
      <g fill="#2e58b0" fontSize="9.800" textAnchor="middle" className="italic tracking-[-0.2px]">
        <text transform="translate(318.500 157) rotate(30)">0.0 mm</text>
        <text transform="translate(589.500 302) rotate(30)">10000.0</text>
        <text transform="translate(810 442) rotate(30)">0.0 mm</text>
      </g>

      <g stroke="#b3b6bd" strokeWidth="1">
        <path fillRule="evenodd" d="M1161 236a43 27 0 1 0 86 0a43 27 0 1 0-86 0zM1171 235a33 19 0 1 0 66 0a33 19 0 1 0-66 0z" fill="#ededed" fillOpacity=".75" stroke="#d2d2d2" />
        <ellipse cx="1204" cy="237" rx="24" ry="10" fill="#dedede" stroke="none" />
        <path d="M1180 204.700l24-11.700 23 12-23.500 11z" fill="#f2f2f2" />
        <path d="M1180 204.700l23.500 11.300v27.700l-21.500-10.700z" fill="#e8e8e9" />
        <path d="M1227 205l-23.500 11v27.700L1225 232z" fill="#dedfe1" />
        <path d="M1167 251l6-4 6 3-6 4zM1228 250l5-4 6 4-6 5zM1174 215l5-4 3 3" fill="#d2d2d2" />
      </g>
      <path d="M1140 269.500l40-24 54-30.500v8l-94 54.500M1200 196l34 19" stroke="#5a6072" strokeWidth="1" opacity=".8" />
      <g fontSize="6" fontWeight="bold" fill="#9a9ea7" textAnchor="middle">
        <text transform="matrix(.9 .42 0 1 1192 226)">FRONT</text>
        <text transform="matrix(.9 -.42 0 1 1215 226)">RIGHT</text>
        <text transform="matrix(.9 .3 -.7 .6 1205 206)" fill="#8390b5">TOP</text>
      </g>
    </svg>
  );
}

function NavigationBar() {
  return (
    <div className="absolute left-[985px] top-[132px] w-[24px] h-[79px] rounded-[4px] border border-[#b8b8b8] bg-[#f6f6f6] flex flex-col items-center text-[#888]">
      <Icon size="w-[5px] h-[5px]" box={8} className="self-end mt-[2px] mr-[2px] opacity-70"><circle cx="4" cy="4" r="3" /></Icon>
      <Icon size="w-[16px] h-[16px]" className="mt-[6px] opacity-50"><rect x="1" y="1" width="14" height="14" rx="5" /><circle cx="8" cy="8" r="4.500" fill="#fff" /><circle cx="8" cy="8" r="2.500" /></Icon>
      <Caret className="mt-[5px]" />
      <div className="w-[16px] h-px bg-[#ccc] mt-[3px]" />
      <Icon size="w-[12px] h-[12px]" className="mt-[4px]"><path d="M1 1h10v10H1z" fill="#bcc4a5" stroke="#a5ad8d" /><circle cx="11" cy="10" r="3" fill="#fff" stroke="#999" /><path d="M13 12l3 3" stroke="#999" /></Icon>
      <Caret className="mt-[6px]" />
      <Icon size="w-[5px] h-[5px]" box={8} className="self-end mt-[7px] mr-[2px] opacity-70"><circle cx="4" cy="4" r="3" /></Icon>
    </div>
  );
}

const VIEW_ICONS = [
  <path key="0" d="M1 3h14v10H1zM4 3l4 4 4-4M3 7h10" />,
  <path key="1" d="M1 6h10v8H1zM1 6l4-4h10v8l-4 4M15 2l-4 4" />,
  <g key="2"><circle cx="7" cy="7" r="5" fill="#ffe3a1" stroke="#d99a2b" /><path d="M8 7l7 7M15 7l-7 7" stroke="#d5432f" strokeWidth="2" /></g>,
  <g key="3"><circle cx="7" cy="6" r="4" fill={SKY} stroke={BLUE} /><path d="M8 7l7 7M15 7l-7 7" stroke="#d5432f" strokeWidth="2" /><path d="M2 13h6" /></g>,
  <g key="4"><path d="M1 4h6l3 4-3 4-5-3z" /><circle cx="12" cy="8" r="3" fill={SKY} stroke={BLUE} /></g>,
  <g key="5"><path d="M1 5h14M1 11h14M4 2v12M12 2v12" stroke={BLUE} strokeWidth="1.500" /><path d="M8 6l7 7M15 6l-7 7" stroke="#d5432f" strokeWidth="2" /></g>,
  <g key="6"><path d="M1 6h10M1 12h14M4 3v11M10 3v11" stroke={BLUE} strokeWidth="1.500" /><circle cx="12" cy="6" r="3" fill={SKY} /></g>,
  <path key="7" d="M8 1l6 3v8l-6 3-6-3V4zM2 5l6 3 6-3M8 8v7M9 10h5v4" />,
  <path key="8" d="M1 5c2 0 2 6 5 6s2-3 5-3 4 2 4-3M6 5h3" strokeWidth="1.700" />,
  <g key="9"><circle cx="8" cy="6" r="3" fill={SKY} stroke={BLUE} /><path d="M7 10h2v3H7z" /></g>,
  <path key="10" d="M1 3h13v10H1zM8 7h4l3 6M3 10h4" strokeWidth="1.600" />,
  <g key="11"><path d="M1 4h6v9H1zM5 2h9v10H5z" /><circle cx="11" cy="9" r="3" fill={SKY} stroke={BLUE} /><path d="M2 9h5" stroke="#d5432f" strokeWidth="2" /></g>,
  <path key="12" d="M2 6l6-3 6 2-1 8-6 2-5-3zM7 8v7M10 4v8" fill="#ccc" />,
  <path key="13" d="M2 1v14M2 3h12M14 1v6M0 1h4M12 1h4M9 9h6v6H9zM10 9V7h4v2" fill="#ccc" />,
];

function Viewport() {
  return (
    <div className="w-[1024px] h-[530px] shrink-0 border-l border-t border-[#8a8d8a] bg-white flex flex-col">
      <div className="h-[513px] flex">
        <div className="relative w-[1009px]">
          <Drawing />
          <NavigationBar />
          <div className="absolute right-[2px] top-[4px] flex gap-[3px]">
            <Icon size="w-[9px] h-[9px]" box={10}><path d="M1 5h8v3H1z" /></Icon>
            <Icon size="w-[9px] h-[9px]" box={10}><path d="M1 3h6v6H1zM3 3V1h6v6H7M3 6h2" /></Icon>
            <Icon size="w-[9px] h-[9px]" box={10}><path d="M1 1h8v8H1zM2 2l6 6M8 2L2 8" /></Icon>
          </div>
        </div>
        <div className="w-[14px] bg-[#f0f0f0] flex flex-col items-center pt-[3px] text-[#444]">
          <Chevron d="up" />
          <div className="w-[12px] h-[14px] bg-[#cdcdcd] mt-[239px]" />
          <div className="flex-1" />
          <Chevron d="down" className="mb-[3px]" />
        </div>
      </div>
      <div className="h-[16px] pb-[2px] bg-[#f0f0f0] flex items-center text-[#333]">
        <span className="w-[43px] ml-[17px] text-[9.200px] tracking-normal">1 : 100</span>
        <div className="w-[231px] ml-[1px] flex justify-between">
          {VIEW_ICONS.map((icon, i) => <Icon key={i} size="w-[12px] h-[12px]">{icon}</Icon>)}
        </div>
        <Chevron d="left" className="ml-[2px]" />
        <div className="w-[14px] h-[12px] bg-[#cdcdcd] ml-[341px]" />
        <div className="flex-1" />
        <Chevron d="right" className="mr-[17px]" />
      </div>
    </div>
  );
}

/* ---------- status bar and taskbar ---------- */

function StatusBar() {
  return (
    <div className="h-[21px] flex items-center border-t border-[#a5a5a5] bg-gradient-to-b from-[#dadada] via-[#e2e2e0] to-[#c8c8c8] text-[10.200px] tracking-[-0.38px] text-[#333]">
      <span className="w-[518px] shrink-0 whitespace-nowrap">Click to select, TAB for alternates, CTRL adds, SHIFT unselects.</span>
      <Icon size="w-[12px] h-[12px]"><path d="M1 7h6v7H1z" fill={SKY} stroke="#2f78a8" strokeWidth="2" /><path d="M6 2h6v6H6z" fill="#b8d5a0" stroke="#4b8743" strokeWidth="1.500" /><path d="M10 8h4v6" strokeWidth="1.500" /></Icon>
      <div className="w-[169px] h-[17px] ml-[6px] bg-white flex items-center justify-end pr-[2px] text-[#aaa]"><Chevron d="down" /></div>
      <Icon size="w-[12px] h-[12px]" className="ml-[5px]"><path d="M4 1h9v4H8L4 3zM8 5L5 9h5l-3 6M3 11h6v4H3z" strokeWidth="1.400" /></Icon>
      <span className="ml-[3px] w-[29px]">:0</span>
      <Icon size="w-[12px] h-[12px]"><path d="M1 1h14v14H1zM1 4h14M5 7h7M8 10h5M8 13h5" strokeWidth="1.500" /></Icon>
      <Icon size="w-[12px] h-[12px]" className="ml-[7px]"><path d="M4 1h11v13H9M4 1v6M4 4h11M7 7h6" strokeWidth="1.500" /><path d="M0 10h8M5 6l4 4-4 4" stroke="#2d70b8" strokeWidth="2.500" /></Icon>
      <div className="w-[127px] h-[17px] ml-[6px] bg-white flex items-center justify-between pl-px pr-[2px] text-[#999] text-[10.500px] tracking-[-0.3px]">Main Model <Chevron d="down" /></div>
      <div className="flex-1" />
      <div className="flex gap-[9px] mr-[42px] opacity-80">
        <Icon size="w-[12px] h-[12px]"><path d="M1 5h6v6H1zM8 5h6v4" fill="#f2d675" stroke="#caa53c" /></Icon>
        <Icon size="w-[12px] h-[12px]"><path d="M2 11c0-9 11-9 12 0zM2 14h12" fill={SKY} stroke={BLUE} /></Icon>
        <Icon size="w-[12px] h-[12px]"><path d="M3 1h8v8H3z" fill="#f5b27d" stroke="#ce7440" /><path d="M10 10l5 5" /></Icon>
        <Icon size="w-[12px] h-[12px]"><path d="M2 4h8v9H2z" fill={SKY} stroke={BLUE} /></Icon>
        <Icon size="w-[12px] h-[12px]"><path d="M3 2l9 9M12 5v9M2 8h8" strokeWidth="2" /></Icon>
        <Icon size="w-[12px] h-[12px]"><path d="M1 3h10L7 8v6H5V8z" /></Icon>
      </div>
    </div>
  );
}

function TaskButton({ children, width = 'w-[34px]', active }: { children: ReactNode; width?: string; active?: boolean }) {
  return (
    <div className={`${width} h-[32px] shrink-0 flex items-center justify-center border-b-2 border-[#2438a8] ${active ? 'bg-[#f3f3fa]' : ''}`}>
      <svg viewBox="0 0 20 20" className="w-[20px] h-[20px]">{children}</svg>
    </div>
  );
}

function Taskbar() {
  return (
    <div className="h-[32px] flex items-center bg-gradient-to-r from-[#dedbe9] via-[#dcd9e8] to-[#d0d6e2] text-[#222]">
      <svg viewBox="0 0 14 14" className="w-[14px] h-[14px] ml-[12px] shrink-0" fill="#111"><path d="M0 2l6-1v6H0zM7 1l7-1v7H7zM0 8h6v5l-6-1zM7 8h7v6l-7-1z" /></svg>
      <Icon className="ml-[26px]"><circle cx="10" cy="6" r="5" stroke="#222" /><path d="M6.500 10L1 15" stroke="#222" /></Icon>
      <Icon className="ml-[26px]"><path d="M2 1v2h8V1M2 15v-2h8v2M2 5h8v6H2zM14 1v6M14 10v5" stroke="#222" /></Icon>
      <svg viewBox="0 0 20 20" className="w-[18px] h-[18px] ml-[26px] shrink-0" fill="#fff" stroke="#dedbe9"><rect x="1" y="1" width="9" height="9" rx="4" /><rect x="10" y="1" width="9" height="9" rx="4" /><rect x="1" y="10" width="9" height="9" rx="4" /><rect x="10" y="10" width="9" height="9" rx="4" /></svg>
      <svg viewBox="0 0 18 18" className="w-[18px] h-[18px] ml-[28px] mr-[14px] shrink-0"><path d="M1 8C2 2 6 0 9.500 0 15 0 18 4 17.500 10H6c0 5 6 6 10 3.500V17C8 20 1 16 2.500 9.500 3.500 6 6 5 7 4.500 6 6 6 7 6 7.500h6C12 2 4 3 1 8z" fill="#0c75d5" /></svg>
      <TaskButton><path d="M1 3h7l1 2h10v12H1z" fill="#f2bd3e" /><path d="M1 7h18v9H1z" fill="#fbd468" /><path d="M4 17v-6h12v6h-3v-3H7v3z" fill="#3d9fd2" /></TaskButton>
      <TaskButton width="w-[34px] ml-[7px]"><circle cx="10" cy="10" r="9" fill="#f5c331" /><path d="M2.200 5.500A9 9 0 0 1 17.800 5.500H10L6 12z" fill="#df4234" /><path d="M2.200 5.500L7 13l3 6A9 9 0 0 1 2.200 5.500z" fill="#33a152" /><circle cx="10" cy="10" r="4.200" fill="#3f7de8" stroke="#fff" strokeWidth="1.500" /></TaskButton>
      <TaskButton width="w-[34px] ml-[8px]"><circle cx="10" cy="10" r="8.500" fill="#49aee0" stroke="#3b9bd0" strokeDasharray="3 2" strokeWidth="1.500" /><path d="M6 7v8M10 6v12M14 7v8" stroke="#fff" strokeWidth="2.500" /><circle cx="6" cy="5" r="1.500" fill="#fff" /><circle cx="10" cy="3.500" r="1.700" fill="#fff" /><circle cx="14" cy="5" r="1.500" fill="#fff" /></TaskButton>
      <TaskButton active width="w-[40px] ml-[4px]"><path d="M0 0h20v20H0z" fill="#8daedd" /><path d="M0 20V13l6-6 3-6h6l2 7-2 3 5 6v3z" fill="#264f98" /><path d="M9 4h4c2 0 2 3 0 4l4 8h-4l-3-7-4 9H2z" fill="#153373" /></TaskButton>
      <TaskButton width="w-[34px] ml-[4px]"><path d="M1 2l12-1v18L1 17z" fill="#e6f0e1" stroke="#4f954b" /><path d="M12 3h7v14h-7" fill="#fff" stroke="#4f954b" /><path d="M4 6l6 8M10 6l-6 8" stroke="#28742d" strokeWidth="2.200" /><path d="M13 6h5M13 9h5M13 12h5" stroke="#439449" strokeWidth="1.600" /></TaskButton>
      <TaskButton width="w-[34px] ml-[7px]"><rect width="20" height="20" rx="2" fill="#fffaf0" /><path d="M13 5.500A6 6 0 1 0 13 14.500L9 10z" fill="#f3b92c" /><circle cx="9" cy="6.500" r="1" fill="#333" /><circle cx="15" cy="10" r="1.300" fill="#f3b92c" /></TaskButton>
      <TaskButton width="w-[34px] ml-[8px]"><rect width="20" height="20" fill="#ec6b25" /><circle cx="10" cy="10" r="4.300" fill="#fff8db" stroke="#f9b060" strokeWidth="1.500" /><path d="M3 6V3h3M14 3h3v3M17 14v3h-3M6 17H3v-3" stroke="#fff" fill="none" /></TaskButton>
      <div className="flex-1" />
      <Icon size="w-[12px] h-[12px]"><path d="M2 11l6-6 6 6" stroke="#222" strokeWidth="1.500" /></Icon>
      <svg viewBox="0 0 14 14" className="w-[14px] h-[14px] ml-[14px]"><circle cx="7" cy="7" r="7" fill="#efd03a" /><path d="M1 4a7 7 0 0 1 12 0c-3-2-5 0-7-1S3 4 1 4zM1 10a7 7 0 0 0 12 0c-3-1-4 1-6 1s-3-2-6-1z" fill="#319b42" /><path d="M7 4v6M4 7h6" stroke="#143e1b" strokeWidth="2" /></svg>
      <Icon className="ml-[13px]"><path d="M3 5h12v7H3z" fill="#222" stroke="#222" /><path d="M1 3v4M4 2v3" stroke="#222" /></Icon>
      <Icon className="ml-[13px]"><path d="M2 12A12 12 0 0 1 14 2M5 13A9 9 0 0 1 14 6M8 14a6 6 0 0 1 6-4M12 14h2" stroke="#444" strokeWidth="1.400" /></Icon>
      <Icon className="ml-[16px]"><path d="M5 13c-5 2-4-5 0-3s4 0 8-7M6 8l7-6c3 0 2 3 0 4l-8 8M9 9l5-1" stroke="#333" /></Icon>
      <span className="ml-[15px] text-[10px] tracking-[-0.3px]">ENG</span>
      <div className="w-[52px] ml-[7px] text-[10px] tracking-[-0.3px] leading-[15px] text-center whitespace-nowrap">1:29 pm<br />16/1/2020</div>
      <Icon size="w-[15px] h-[15px]" className="ml-[10px] mr-[20px]"><path d="M1 1h14v11H8l-3 3v-3H1z" fill="#1c1c1c" stroke="none" /><path d="M3 4h10M3 7h10M3 10h6" stroke="#ccc" strokeWidth="1" /><circle cx="12" cy="12" r="3" fill="#333" /></Icon>
    </div>
  );
}

function Watermark() {
  return (
    <svg viewBox="0 0 204 72" className="absolute left-[1074px] top-[648px] w-[204px] h-[72px] pointer-events-none">
      <path d="M8 36c-4-14 10-28 20-27l4-5c-2 7 8 6 6 20-1 4-1 8 0 11L30 67c-1 2-2 2-3 0L15 38c-2-1-4 1-7-2z" fill="#fff" fillOpacity=".6" />
      <path d="M7 36c4-5 6 2 10-1 5-3 5 5 10 2s6 2 8-2l4-2M38 36L28 68" fill="none" stroke="#777" strokeOpacity=".65" />
      <g className="font-['Liberation_Serif',serif] italic">
        <text x="50" y="39" fontSize="38" textLength="146" fill="#f4f4f4" fillOpacity=".75" className="drop-shadow-[1px_1px_0_rgba(110,110,110,0.7)]">Icecream</text>
        <text x="155" y="61" fontSize="18" textLength="42" fill="#fff" fillOpacity=".15" stroke="#888" strokeWidth=".6" strokeOpacity=".5" className="font-['Liberation_Sans',sans-serif]">APPS</text>
      </g>
    </svg>
  );
}

export default function App() {
  return (
    <div className="relative w-[1280px] h-[720px] overflow-hidden bg-[#eef0ee] border-x-2 border-black flex flex-col font-['Noto_Sans','Open_Sans',sans-serif] text-[10.2px] select-none">
      <TitleBar />
      <RibbonTabs />
      <Ribbon />
      <div className="h-[22px] shrink-0 bg-[#d8e1cf] pl-[6px] leading-[23px] text-[#aab0a5] tracking-[-0.48px]">Modify | Structural Framing</div>
      <div className="h-[530px] shrink-0 flex">
        <div className="w-[248px] shrink-0 border-r border-[#d0d0d0] bg-[#f0f0f0] text-[9.9px] tracking-[-0.35px] text-[#333]">
          <PropertiesPalette />
          <ProjectBrowser />
        </div>
        <div className="w-[4px] shrink-0" />
        <Viewport />
      </div>
      <StatusBar />
      <Taskbar />
      <div className="absolute left-0 top-0 w-[27px] h-[27px] bg-gradient-to-b from-[#b4b4b4] to-[#7e7e7e] border border-[#6a6a6a] flex items-center">
        <svg viewBox="0 0 20 22" className="w-[17px] h-[20px]"><path d="M6 3c6-3 12-1 11 4 0 3-3 4-3 4l4 8-5-1-4-7-3 9-6 1L6 8 3 7z" fill="#1d3f91" /><path d="M10 6l3-1-1 3-2 1z" fill="#5577bb" /></svg>
        <Caret className="ml-[1px] text-[#333]" />
      </div>
      <svg viewBox="0 0 12 18" className="absolute left-[252px] top-[352px] w-[11px] h-[16px]"><path d="M1 1v13l3-3 3 6 2-1-2-6h4z" fill="#fff" stroke="#444" /></svg>
      <Watermark />
    </div>
  );
}
